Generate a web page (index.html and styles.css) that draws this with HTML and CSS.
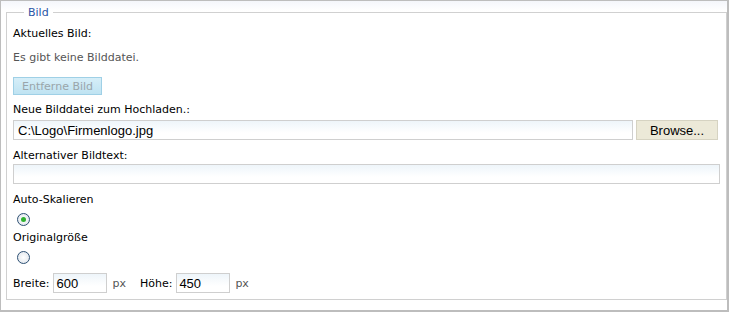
FILE: index.html
```html
<!DOCTYPE html>
<html lang="de">
<head>
  <meta charset="UTF-8" />
  <title>Bild</title>
  <link rel="stylesheet" href="styles.css">
</head>
<body>
  <div class="frame">
    <fieldset class="box">
      <legend>Bild</legend>
      <div class="label">Aktuelles Bild:</div>
      <div class="note">Es gibt keine Bilddatei.</div>
      <button class="remove" disabled>Entferne Bild</button>
      <div class="label">Neue Bilddatei zum Hochladen.:</div>
      <div class="file-row">
        <input type="text" class="field file" value="C:\Logo\Firmenlogo.jpg" />
        <button class="browse">Browse...</button>
      </div>
      <div class="label after-field">Alternativer Bildtext:</div>
      <input type="text" class="field wide" value="" />
      <div class="label after-field">Auto-Skalieren</div>
      <div class="radio"><span class="dot checked"></span></div>
      <div class="label tight">Originalgröße</div>
      <div class="radio"><span class="dot"></span></div>
      <div class="size-row">
        <span>Breite:</span>
        <input type="text" class="field small" value="600" />
        <span class="unit">px</span>
        <span class="gap">Höhe:</span>
        <input type="text" class="field small" value="450" />
        <span class="unit">px</span>
      </div>
    </fieldset>
  </div>
</body>
</html>
```

FILE: styles.css
```css
html, body {
  margin: 0;
  padding: 0;
  background: #fff;
}
body {
  font-family: "DejaVu Sans", Verdana, sans-serif;
  font-size: 11px;
  color: #000;
}
.frame {
  width: 729px;
  height: 312px;
  box-sizing: border-box;
  border: 1px solid #bdbdbd;
  border-right-width: 2px;
  border-bottom-width: 2px;
  padding: 5px 5px 0 5px;
  background: linear-gradient(#f4f6fb, #fff 10px);
}
.box {
  margin: 0;
  height: 294px;
  box-sizing: border-box;
  border: 1px solid #d0d0d0;
  padding: 0 6px;
  background: #fff;
}
.box legend {
  color: #2a55a5;
  padding: 0 4px;
  margin-left: 11px;
  line-height: 13px;
}
.label {
  line-height: 14px;
  margin-top: 8px;
}
.label.after-field {
  margin-top: 9px;
}
.label.tight {
  margin-top: 5px;
}
.note {
  color: #555;
  margin-top: 10px;
  line-height: 14px;
}
.remove {
  margin-top: 12px;
  width: 89px;
  height: 18px;
  font-family: inherit;
  font-size: 11px;
  color: #9aa5aa;
  background: linear-gradient(#d6eef8, #bfe3f2);
  border: 1px solid #9fd0e6;
  padding: 0;
}
.file-row {
  display: flex;
  gap: 3px;
  margin-top: 3px;
}
.field {
  box-sizing: border-box;
  height: 20px;
  border: 1px solid #cfcfcf;
  background: linear-gradient(#eef5fa, #fff 12px);
  font-family: "Liberation Sans", Arial, sans-serif;
  font-size: 13px;
  padding: 0 4px;
  color: #000;
}
.file {
  width: 620px;
}
.browse {
  width: 82px;
  height: 20px;
  font-family: "Liberation Sans", Arial, sans-serif;
  font-size: 13px;
  background: #ece9d8;
  border: 1px solid #d6d3c2;
  padding: 0;
}
.wide {
  display: block;
  width: 707px;
  margin-top: 1px;
}
.radio {
  height: 13px;
  margin-top: 6px;
  padding-left: 4px;
}
.dot {
  display: block;
  box-sizing: border-box;
  width: 13px;
  height: 13px;
  border-radius: 50%;
  border: 1px solid #2d5073;
  background: radial-gradient(#fff, #dde3ea);
  position: relative;
}
.dot.checked::after {
  content: "";
  position: absolute;
  left: 3px;
  top: 3px;
  width: 5px;
  height: 5px;
  border-radius: 50%;
  background: #2fb12f;
}
.size-row {
  display: flex;
  align-items: center;
  margin-top: 9px;
}
.small {
  width: 54px;
  margin-left: 4px;
  padding: 0 2px;
}
.unit {
  margin-left: 5px;
  color: #555;
}
.gap {
  margin-left: 14px;
}
```
